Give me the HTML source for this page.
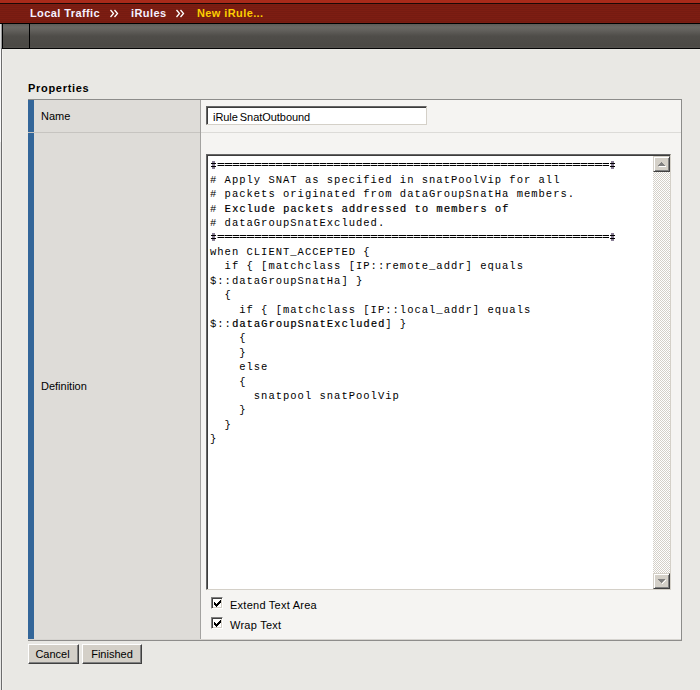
<!DOCTYPE html>
<html>
<head>
<meta charset="utf-8">
<style>
html,body{margin:0;padding:0;}
body{width:700px;height:690px;overflow:hidden;position:relative;background:#e9e8e4;font-family:"Liberation Sans",sans-serif;font-size:11px;color:#000;}
.abs{position:absolute;}
#topred{left:0;top:0;width:700px;height:3px;background:#a92a1a;}
#bl1{left:0;top:3px;width:700px;height:1px;background:#1a0805;}
#crumb{left:0;top:4px;width:700px;height:19px;background:repeating-linear-gradient(to bottom,#7d1d12 0px,#7d1d12 1px,#761b11 1px,#761b11 2px);}
#bl2{left:0;top:23px;width:700px;height:1px;background:#000;}
#tool{left:0;top:24px;width:700px;height:24px;background:linear-gradient(to bottom,#5d5b57 0px,#6a6864 3px,#605e5a 7px,#4f4d49 12px,#4b4945 22px,#53514d 24px);}
#bl3{left:0;top:48px;width:700px;height:1px;background:#050505;}
#lstrip{left:0;top:24px;width:1px;height:666px;background:linear-gradient(to bottom,#dcdcdc 0,#dcdcdc 25px,#fafafa 25px,#fafafa 118px,#e8e8e6 118px);}
#lhl{left:2px;top:49px;width:1px;height:641px;background:#f2f1ee;}
#lline{left:1px;top:24px;width:1px;height:666px;background:linear-gradient(to bottom,#9a9a9a 0,#9a9a9a 24px,#6c6c6c 24px);}
#lblk{left:2px;top:24px;width:1px;height:24px;background:#000;}
#tsep{left:29px;top:24px;width:1px;height:24px;background:#000;}
.crumb{top:7px;font-weight:bold;font-size:11px;color:#f4f0ff;white-space:nowrap;letter-spacing:0.4px;}
#props{left:28px;top:82px;font-weight:bold;font-size:11px;color:#000;letter-spacing:0.7px;}
#ttop{left:28px;top:99px;width:654px;height:1px;background:#8c8c8a;}
#tright{left:681px;top:99px;width:1px;height:542px;background:#8c8c8a;}
#tbot{left:28px;top:640px;width:654px;height:1px;background:#8e8d8b;}
#tbot2{left:28px;top:639px;width:653px;height:1px;background:#d6d4d0;}
#blue1{left:28px;top:100px;width:6px;height:32px;background:#336699;}
#blue2{left:28px;top:133px;width:6px;height:506px;background:#336699;}
#lab1{left:34px;top:100px;width:166px;height:32px;background:#dedcd8;}
#lab2{left:34px;top:133px;width:166px;height:506px;background:#dedcd8;}
#vsep{left:200px;top:100px;width:1px;height:539px;background:#a3a2a0;}
#val1{left:201px;top:100px;width:480px;height:32px;background:#f5f4f2;}
#val2{left:201px;top:133px;width:480px;height:506px;background:#f5f4f2;}
#rsepv{left:201px;top:132px;width:480px;height:1px;background:#dcdbd8;}
#rsepl{left:28px;top:132px;width:172px;height:1px;background:#c6c4c0;}
.lbl{font-size:11px;color:#000;white-space:nowrap;}
#namebox{left:206px;top:106px;width:221px;height:19px;box-sizing:border-box;background:#fff;border-top:1px solid #666;border-left:1px solid #666;border-right:1px solid #d4d0c8;border-bottom:1px solid #d4d0c8;box-shadow:inset 1px 1px 0 #3c3c3c;}
#nametxt{left:213px;top:111px;font-size:11px;color:#000;white-space:nowrap;word-spacing:-1px;letter-spacing:-0.05px;}
#ta{left:206px;top:154px;width:465px;height:436px;box-sizing:border-box;background:#fff;border-top:1px solid #666;border-left:1px solid #666;border-right:1px solid #d4d0c8;border-bottom:1px solid #d4d0c8;box-shadow:inset 1px 1px 0 #3c3c3c;}
#code{left:210px;top:158.5px;font-family:"Liberation Mono",monospace;font-size:10.5px;letter-spacing:1px;line-height:14.4px;white-space:pre;color:#000;margin:0;}
#sbar{left:653px;top:156px;width:17px;height:433px;background-color:#fff;background-image:repeating-conic-gradient(#d4d0c8 0 25%,#fff 0 50%);background-size:2px 2px;}
.sbtn{width:17px;height:16px;box-sizing:border-box;background:#d4d0c8;border-top:1px solid #d4d0c8;border-left:1px solid #d4d0c8;border-right:1px solid #404040;border-bottom:1px solid #404040;box-shadow:inset 1px 1px 0 #fff,inset -1px -1px 0 #808080;}
#sup{left:653px;top:156px;}
#sdn{left:653px;top:573px;}
.cb{width:12px;height:12px;box-sizing:border-box;background:#fff;border-top:1px solid #808080;border-left:1px solid #808080;border-right:1px solid #fff;border-bottom:1px solid #fff;box-shadow:inset 1px 1px 0 #404040,inset -1px -1px 0 #d4d0c8;}
.btn{height:20px;box-sizing:border-box;background:#d4d0c8;border-top:1px solid #fff;border-left:1px solid #fff;border-right:1px solid #404040;border-bottom:1px solid #404040;box-shadow:inset -1px -1px 0 #808080;font-size:11px;color:#000;text-align:center;line-height:18px;}
svg{position:absolute;display:block;}
.sm{font-weight:normal;text-shadow:0.5px 0 0 rgba(0,0,0,0.45);}
</style>
</head>
<body>
<div class="abs" id="topred"></div>
<div class="abs" id="bl1"></div>
<div class="abs" id="crumb"></div>
<div class="abs" id="bl2"></div>
<div class="abs" id="tool"></div>
<div class="abs" id="bl3"></div>
<div class="abs" id="lstrip"></div>
<div class="abs" id="lline"></div>
<div class="abs" id="lblk"></div>
<div class="abs" id="lhl"></div>
<div class="abs" id="tsep"></div>

<div class="abs crumb" style="left:30px;">Local Traffic</div>
<svg style="left:109px;top:9px;" width="10" height="9" viewBox="0 0 10 9"><path d="M1.5 1L4.5 4.5L1.5 8M5.5 1L8.5 4.5L5.5 8" fill="none" stroke="#fff" stroke-width="1.3"/></svg>
<div class="abs crumb" style="left:131px;">iRules</div>
<svg style="left:175px;top:9px;" width="10" height="9" viewBox="0 0 10 9"><path d="M1.5 1L4.5 4.5L1.5 8M5.5 1L8.5 4.5L5.5 8" fill="none" stroke="#fff" stroke-width="1.3"/></svg>
<div class="abs crumb" style="left:197px;color:#fcce00;">New iRule...</div>

<div class="abs" id="props">Properties</div>

<div class="abs" id="ttop"></div>
<div class="abs" id="tright"></div>
<div class="abs" id="tbot"></div>
<div class="abs" id="lab1"></div>
<div class="abs" id="lab2"></div>
<div class="abs" id="val1"></div>
<div class="abs" id="val2"></div>
<div class="abs" id="rsepv"></div>
<div class="abs" id="rsepl"></div>
<div class="abs" id="vsep"></div>
<div class="abs" id="blue1"></div>
<div class="abs" id="blue2"></div>
<div class="abs" id="tbot2"></div>

<div class="abs lbl" style="left:41px;top:110px;">Name</div>
<div class="abs lbl" style="left:41px;top:380px;">Definition</div>

<div class="abs" id="namebox"></div>
<div class="abs" id="nametxt">iRule SnatOutbound</div>

<div class="abs" id="ta"></div>
<pre class="abs" id="code">                                                        
# Apply SNAT as specified in snatPoolVip for all
# packets originated from dataGroupSnatHa members.
# <b class="sm">Exclude packets addressed to members of</b>
# dataGroupSnatExcluded.
                                                        
when CLIENT_ACCEPTED {
  if { [matchclass [IP::remote_addr] equals
$::dataGroupSnatHa] }
  {
    if { [matchclass [IP::local_addr] equals
$::<b class="sm">dataGroupSnatExcluded</b>] }
    {
    }
    else
    {
      snatpool snatPoolVip
    }
  }
}</pre>
<svg style="left:0;top:0;" width="700" height="690" viewBox="0 0 700 690" shape-rendering="crispEdges">
<g fill="#000"><rect x="217" y="163" width="392" height="1" fill="#8c8c8c"/><rect x="218" y="163" width="6" height="1"/><rect x="225" y="163" width="7" height="1"/><rect x="233" y="163" width="6" height="1"/><rect x="240" y="163" width="6" height="1"/><rect x="247" y="163" width="7" height="1"/><rect x="255" y="163" width="6" height="1"/><rect x="262" y="163" width="6" height="1"/><rect x="269" y="163" width="6" height="1"/><rect x="276" y="163" width="6" height="1"/><rect x="283" y="163" width="7" height="1"/><rect x="291" y="163" width="6" height="1"/><rect x="298" y="163" width="6" height="1"/><rect x="305" y="163" width="7" height="1"/><rect x="313" y="163" width="6" height="1"/><rect x="320" y="163" width="6" height="1"/><rect x="327" y="163" width="6" height="1"/><rect x="334" y="163" width="6" height="1"/><rect x="341" y="163" width="7" height="1"/><rect x="349" y="163" width="6" height="1"/><rect x="356" y="163" width="6" height="1"/><rect x="363" y="163" width="7" height="1"/><rect x="371" y="163" width="6" height="1"/><rect x="378" y="163" width="6" height="1"/><rect x="385" y="163" width="6" height="1"/><rect x="392" y="163" width="6" height="1"/><rect x="399" y="163" width="7" height="1"/><rect x="407" y="163" width="6" height="1"/><rect x="414" y="163" width="6" height="1"/><rect x="421" y="163" width="7" height="1"/><rect x="429" y="163" width="6" height="1"/><rect x="436" y="163" width="6" height="1"/><rect x="443" y="163" width="6" height="1"/><rect x="450" y="163" width="6" height="1"/><rect x="457" y="163" width="7" height="1"/><rect x="465" y="163" width="6" height="1"/><rect x="472" y="163" width="6" height="1"/><rect x="479" y="163" width="7" height="1"/><rect x="487" y="163" width="6" height="1"/><rect x="494" y="163" width="6" height="1"/><rect x="501" y="163" width="6" height="1"/><rect x="508" y="163" width="6" height="1"/><rect x="515" y="163" width="7" height="1"/><rect x="523" y="163" width="6" height="1"/><rect x="530" y="163" width="6" height="1"/><rect x="537" y="163" width="7" height="1"/><rect x="545" y="163" width="6" height="1"/><rect x="552" y="163" width="6" height="1"/><rect x="559" y="163" width="6" height="1"/><rect x="566" y="163" width="6" height="1"/><rect x="573" y="163" width="7" height="1"/><rect x="581" y="163" width="6" height="1"/><rect x="588" y="163" width="6" height="1"/><rect x="595" y="163" width="7" height="1"/><rect x="603" y="163" width="6" height="1"/><rect x="217" y="165" width="392" height="1" fill="#8c8c8c"/><rect x="218" y="165" width="6" height="1"/><rect x="225" y="165" width="7" height="1"/><rect x="233" y="165" width="6" height="1"/><rect x="240" y="165" width="6" height="1"/><rect x="247" y="165" width="7" height="1"/><rect x="255" y="165" width="6" height="1"/><rect x="262" y="165" width="6" height="1"/><rect x="269" y="165" width="6" height="1"/><rect x="276" y="165" width="6" height="1"/><rect x="283" y="165" width="7" height="1"/><rect x="291" y="165" width="6" height="1"/><rect x="298" y="165" width="6" height="1"/><rect x="305" y="165" width="7" height="1"/><rect x="313" y="165" width="6" height="1"/><rect x="320" y="165" width="6" height="1"/><rect x="327" y="165" width="6" height="1"/><rect x="334" y="165" width="6" height="1"/><rect x="341" y="165" width="7" height="1"/><rect x="349" y="165" width="6" height="1"/><rect x="356" y="165" width="6" height="1"/><rect x="363" y="165" width="7" height="1"/><rect x="371" y="165" width="6" height="1"/><rect x="378" y="165" width="6" height="1"/><rect x="385" y="165" width="6" height="1"/><rect x="392" y="165" width="6" height="1"/><rect x="399" y="165" width="7" height="1"/><rect x="407" y="165" width="6" height="1"/><rect x="414" y="165" width="6" height="1"/><rect x="421" y="165" width="7" height="1"/><rect x="429" y="165" width="6" height="1"/><rect x="436" y="165" width="6" height="1"/><rect x="443" y="165" width="6" height="1"/><rect x="450" y="165" width="6" height="1"/><rect x="457" y="165" width="7" height="1"/><rect x="465" y="165" width="6" height="1"/><rect x="472" y="165" width="6" height="1"/><rect x="479" y="165" width="7" height="1"/><rect x="487" y="165" width="6" height="1"/><rect x="494" y="165" width="6" height="1"/><rect x="501" y="165" width="6" height="1"/><rect x="508" y="165" width="6" height="1"/><rect x="515" y="165" width="7" height="1"/><rect x="523" y="165" width="6" height="1"/><rect x="530" y="165" width="6" height="1"/><rect x="537" y="165" width="7" height="1"/><rect x="545" y="165" width="6" height="1"/><rect x="552" y="165" width="6" height="1"/><rect x="559" y="165" width="6" height="1"/><rect x="566" y="165" width="6" height="1"/><rect x="573" y="165" width="7" height="1"/><rect x="581" y="165" width="6" height="1"/><rect x="588" y="165" width="6" height="1"/><rect x="595" y="165" width="7" height="1"/><rect x="603" y="165" width="6" height="1"/><rect x="217" y="235" width="392" height="1" fill="#8c8c8c"/><rect x="218" y="235" width="6" height="1"/><rect x="225" y="235" width="7" height="1"/><rect x="233" y="235" width="6" height="1"/><rect x="240" y="235" width="6" height="1"/><rect x="247" y="235" width="7" height="1"/><rect x="255" y="235" width="6" height="1"/><rect x="262" y="235" width="6" height="1"/><rect x="269" y="235" width="6" height="1"/><rect x="276" y="235" width="6" height="1"/><rect x="283" y="235" width="7" height="1"/><rect x="291" y="235" width="6" height="1"/><rect x="298" y="235" width="6" height="1"/><rect x="305" y="235" width="7" height="1"/><rect x="313" y="235" width="6" height="1"/><rect x="320" y="235" width="6" height="1"/><rect x="327" y="235" width="6" height="1"/><rect x="334" y="235" width="6" height="1"/><rect x="341" y="235" width="7" height="1"/><rect x="349" y="235" width="6" height="1"/><rect x="356" y="235" width="6" height="1"/><rect x="363" y="235" width="7" height="1"/><rect x="371" y="235" width="6" height="1"/><rect x="378" y="235" width="6" height="1"/><rect x="385" y="235" width="6" height="1"/><rect x="392" y="235" width="6" height="1"/><rect x="399" y="235" width="7" height="1"/><rect x="407" y="235" width="6" height="1"/><rect x="414" y="235" width="6" height="1"/><rect x="421" y="235" width="7" height="1"/><rect x="429" y="235" width="6" height="1"/><rect x="436" y="235" width="6" height="1"/><rect x="443" y="235" width="6" height="1"/><rect x="450" y="235" width="6" height="1"/><rect x="457" y="235" width="7" height="1"/><rect x="465" y="235" width="6" height="1"/><rect x="472" y="235" width="6" height="1"/><rect x="479" y="235" width="7" height="1"/><rect x="487" y="235" width="6" height="1"/><rect x="494" y="235" width="6" height="1"/><rect x="501" y="235" width="6" height="1"/><rect x="508" y="235" width="6" height="1"/><rect x="515" y="235" width="7" height="1"/><rect x="523" y="235" width="6" height="1"/><rect x="530" y="235" width="6" height="1"/><rect x="537" y="235" width="7" height="1"/><rect x="545" y="235" width="6" height="1"/><rect x="552" y="235" width="6" height="1"/><rect x="559" y="235" width="6" height="1"/><rect x="566" y="235" width="6" height="1"/><rect x="573" y="235" width="7" height="1"/><rect x="581" y="235" width="6" height="1"/><rect x="588" y="235" width="6" height="1"/><rect x="595" y="235" width="7" height="1"/><rect x="603" y="235" width="6" height="1"/><rect x="217" y="237" width="392" height="1" fill="#8c8c8c"/><rect x="218" y="237" width="6" height="1"/><rect x="225" y="237" width="7" height="1"/><rect x="233" y="237" width="6" height="1"/><rect x="240" y="237" width="6" height="1"/><rect x="247" y="237" width="7" height="1"/><rect x="255" y="237" width="6" height="1"/><rect x="262" y="237" width="6" height="1"/><rect x="269" y="237" width="6" height="1"/><rect x="276" y="237" width="6" height="1"/><rect x="283" y="237" width="7" height="1"/><rect x="291" y="237" width="6" height="1"/><rect x="298" y="237" width="6" height="1"/><rect x="305" y="237" width="7" height="1"/><rect x="313" y="237" width="6" height="1"/><rect x="320" y="237" width="6" height="1"/><rect x="327" y="237" width="6" height="1"/><rect x="334" y="237" width="6" height="1"/><rect x="341" y="237" width="7" height="1"/><rect x="349" y="237" width="6" height="1"/><rect x="356" y="237" width="6" height="1"/><rect x="363" y="237" width="7" height="1"/><rect x="371" y="237" width="6" height="1"/><rect x="378" y="237" width="6" height="1"/><rect x="385" y="237" width="6" height="1"/><rect x="392" y="237" width="6" height="1"/><rect x="399" y="237" width="7" height="1"/><rect x="407" y="237" width="6" height="1"/><rect x="414" y="237" width="6" height="1"/><rect x="421" y="237" width="7" height="1"/><rect x="429" y="237" width="6" height="1"/><rect x="436" y="237" width="6" height="1"/><rect x="443" y="237" width="6" height="1"/><rect x="450" y="237" width="6" height="1"/><rect x="457" y="237" width="7" height="1"/><rect x="465" y="237" width="6" height="1"/><rect x="472" y="237" width="6" height="1"/><rect x="479" y="237" width="7" height="1"/><rect x="487" y="237" width="6" height="1"/><rect x="494" y="237" width="6" height="1"/><rect x="501" y="237" width="6" height="1"/><rect x="508" y="237" width="6" height="1"/><rect x="515" y="237" width="7" height="1"/><rect x="523" y="237" width="6" height="1"/><rect x="530" y="237" width="6" height="1"/><rect x="537" y="237" width="7" height="1"/><rect x="545" y="237" width="6" height="1"/><rect x="552" y="237" width="6" height="1"/><rect x="559" y="237" width="6" height="1"/><rect x="566" y="237" width="6" height="1"/><rect x="573" y="237" width="7" height="1"/><rect x="581" y="237" width="6" height="1"/><rect x="588" y="237" width="6" height="1"/><rect x="595" y="237" width="7" height="1"/><rect x="603" y="237" width="6" height="1"/>
<rect x="211" y="163" width="5" height="1"/><rect x="211" y="166" width="5" height="1"/><rect x="610" y="163" width="5" height="1"/><rect x="610" y="166" width="5" height="1"/>
<rect x="211" y="235" width="5" height="1"/><rect x="211" y="238" width="5" height="1"/><rect x="610" y="235" width="5" height="1"/><rect x="610" y="238" width="5" height="1"/></g>
<g fill="#8a7f96"><rect x="212" y="161" width="3" height="8"/><rect x="611" y="161" width="3" height="8"/><rect x="212" y="233" width="3" height="8"/><rect x="611" y="233" width="3" height="8"/></g>
<g fill="#000"><rect x="211" y="163" width="5" height="1"/><rect x="211" y="166" width="5" height="1"/><rect x="610" y="163" width="5" height="1"/><rect x="610" y="166" width="5" height="1"/>
<rect x="211" y="235" width="5" height="1"/><rect x="211" y="238" width="5" height="1"/><rect x="610" y="235" width="5" height="1"/><rect x="610" y="238" width="5" height="1"/></g>
</svg>
<div class="abs" id="sbar"></div>
<div class="abs sbtn" id="sup"></div>
<div class="abs sbtn" id="sdn"></div>
<svg style="left:653px;top:156px;" width="17" height="16" viewBox="0 0 17 16" shape-rendering="crispEdges"><path d="M8 6h1v1h-1zM7 7h3v1h-3zM6 8h5v1h-5zM5 9h7v1h-7z" fill="#808080"/><path d="M6 10h7v1h-7z" fill="#fff"/></svg>
<svg style="left:653px;top:573px;" width="17" height="16" viewBox="0 0 17 16" shape-rendering="crispEdges"><path d="M5 6h7v1h-7zM6 7h5v1h-5zM7 8h3v1h-3zM8 9h1v1h-1z" fill="#808080"/><path d="M12 7h1v1h-1zM11 8h1v1h-1zM10 9h1v1h-1zM9 10h1v1h-1z" fill="#fff"/></svg>

<div class="abs cb" style="left:211px;top:597px;"></div>
<svg style="left:211px;top:597px;" width="13" height="13" viewBox="0 0 13 13" shape-rendering="crispEdges"><path d="M9 3h1v1h-1zM8 4h2v1h-2zM3 5h1v1h-1zM7 5h3v1h-3zM3 6h2v1h-2zM6 6h3v1h-3zM3 7h5v1h-5zM4 8h3v1h-3zM5 9h1v1h-1z" fill="#000"/></svg>
<div class="abs lbl" style="left:230px;top:599px;letter-spacing:0.25px;">Extend Text Area</div>
<div class="abs cb" style="left:211px;top:617px;"></div>
<svg style="left:211px;top:617px;" width="13" height="13" viewBox="0 0 13 13" shape-rendering="crispEdges"><path d="M9 3h1v1h-1zM8 4h2v1h-2zM3 5h1v1h-1zM7 5h3v1h-3zM3 6h2v1h-2zM6 6h3v1h-3zM3 7h5v1h-5zM4 8h3v1h-3zM5 9h1v1h-1z" fill="#000"/></svg>
<div class="abs lbl" style="left:230px;top:619px;letter-spacing:0.25px;">Wrap Text</div>

<div class="abs btn" style="left:28px;top:644px;width:51px;padding-right:2px;">Cancel</div>
<div class="abs btn" style="left:82px;top:644px;width:60px;">Finished</div>
</body>
</html>
